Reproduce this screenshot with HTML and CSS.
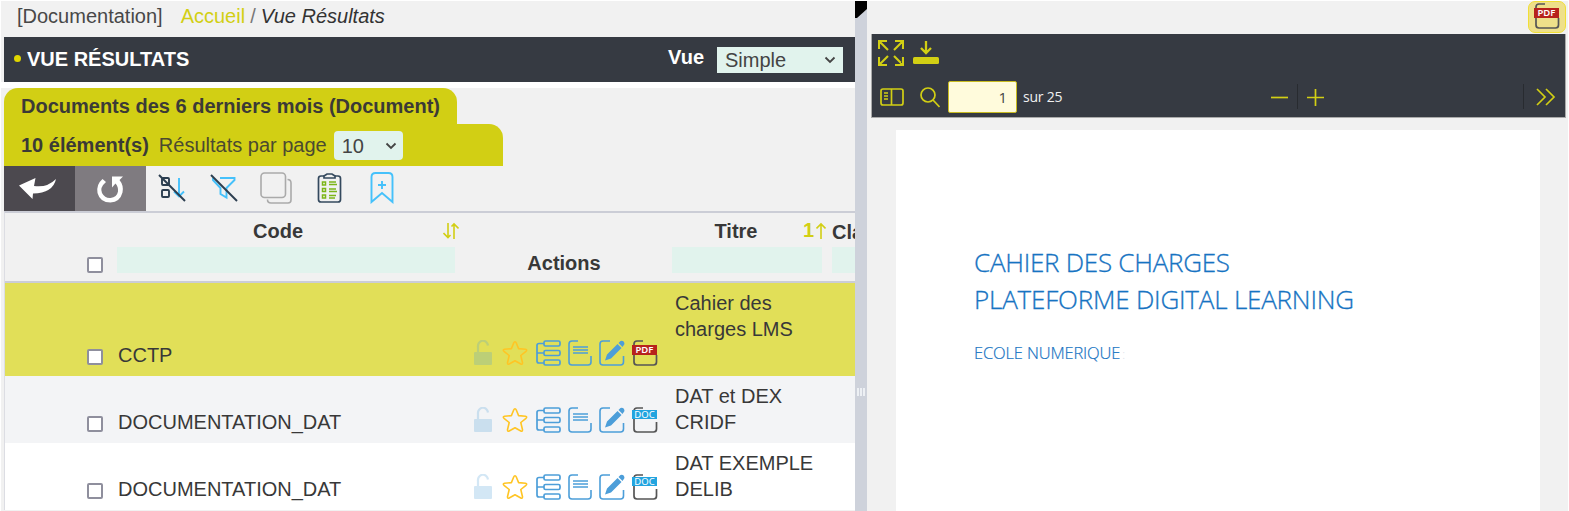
FILE: index.html
```html
<!DOCTYPE html>
<html lang="fr">
<head>
<meta charset="utf-8">
<title>Vue Résultats</title>
<link rel="stylesheet" href="styles.css">
</head>
<body>
<svg class="defs" width="0" height="0">
  <symbol id="lock" viewBox="0 0 18 26"><rect y="12" width="18" height="13" rx="1"/><path d="M4 12V7a5 5.500 0 0 1 10-1.500" fill="none" stroke="currentColor" stroke-width="2.200"/></symbol>
  <symbol id="star" viewBox="0 0 26 26"><path d="M13 1.800Q13.800 1.800 14.300 3L16.600 8.600 23.500 9.300Q25.500 9.800 24 11.300L18.800 15.500 20.500 22.800Q20.500 24.700 18.800 24L13 20.700 7.200 24Q5.500 24.700 5.500 22.800L7.200 15.500 2 11.300Q.5 9.800 2.500 9.300L9.400 8.600 11.700 3Q12.200 1.800 13 1.800z" fill="none" stroke="currentColor" stroke-width="1.600" stroke-linejoin="round"/></symbol>
  <symbol id="tree" viewBox="0 0 26 26"><g fill="none" stroke="currentColor" stroke-width="1.700"><rect x="9" y="1" width="16" height="5" rx="1.500"/><rect x="9" y="10.500" width="16" height="5" rx="1.500"/><rect x="9" y="20" width="16" height="5" rx="1.500"/><path d="M9 3.500H4Q2 3.500 2 5.500V21Q2 23 4 23H9M2 13H9"/></g></symbol>
  <symbol id="note" viewBox="0 0 24 26"><path d="M10 1H4Q1 1 1 4V22Q1 25 4 25H20Q23 25 23 22V16" fill="none" stroke="currentColor" stroke-width="1.600"/><path d="M5 7H20M5 10H20M5 13H20" stroke="currentColor" stroke-width="1.300"/></symbol>
  <symbol id="edit" viewBox="0 0 26 26"><path d="M11 1H4Q1 1 1 4V22Q1 25 4 25H21.500Q24.500 25 24.500 22V16" fill="none" stroke="currentColor" stroke-width="1.600"/><path d="M6 20.500L8 14.500 18.500 4 22.500 8 12 18.500zM19.500 3L21.500 1Q25 0 25.500 4L23.500 7z" fill="currentColor"/></symbol>
  <symbol id="file" viewBox="0 0 26 26"><path d="M11 1H5Q2 1 2 4V22Q2 25 5 25H21.500Q24.500 25 24.500 22V15" fill="none" stroke="#555" stroke-width="1.700"/></symbol>
</svg>
<div class="app">
  <main class="left">
    <nav class="crumbs"><span class="ctx">[Documentation]</span><a>Accueil</a><span class="sep">/</span><i>Vue Résultats</i></nav>
    <header class="titlebar">
      <span class="dot"></span><h1>VUE RÉSULTATS</h1>
      <label>Vue</label>
      <div class="select view"><span>Simple</span><svg width="12" height="8" viewBox="0 0 12 8"><path d="M1.500 1.500L6 6l4.500-4.500"/></svg></div>
    </header>
    <div class="tab first">Documents des 6 derniers mois (Document)</div>
    <div class="tab second"><b>10 élément(s)</b><span>Résultats par page</span>
      <div class="select count"><span>10</span><svg width="12" height="8" viewBox="0 0 12 8"><path d="M1.500 1.500L6 6l4.500-4.500"/></svg></div>
    </div>
    <div class="toolbar">
      <button class="back"><svg width="38" height="24" viewBox="0 0 38 24"><path d="M0 8.500L16.500 1 15 9Q28 11 37 2 34 16 14 16.500L13.500 22z" fill="#fff"/></svg></button>
      <button class="reload"><svg width="28" height="28" viewBox="0 0 28 28"><path d="M6.500 4L10 7Q3.500 12.500 6 18 9 23.500 14.500 23 21 22 22 16.500 22.500 12 19.500 8.500L16 12.500V1.500H27L23.500 5Q28 10.500 26.500 17.500 24 27 14.500 27.500 4 27.500 1.500 18 0 9.500 6.500 4z" fill="#fff"/></svg></button>
      <div class="tools">
        <svg width="28" height="28" viewBox="0 0 28 28" fill="none" stroke-width="1.900"><g stroke="#2c3e50"><rect x="4" y="4" width="7" height="7" rx="1"/><rect x="4" y="16" width="7" height="7" rx="1"/></g><path d="M21 4V22M16 17.500L21 22.500 26 17.500" stroke="#45c1fb"/><path d="M1 1L27 27" stroke="#2c3e50"/></svg>
        <svg width="28" height="28" viewBox="0 0 28 28" fill="none" stroke-width="1.900"><path d="M10 4H24.500V6L16.500 14V23.500L10.500 20V14L3 6V4" stroke="#45c1fb"/><path d="M1 1L27 27" stroke="#2c3e50"/></svg>
        <svg width="32" height="32" viewBox="0 0 32 32" fill="none" stroke="#aaa" stroke-width="1.600"><rect x="1" y="1" width="24.500" height="24.500" rx="3.500"/><path d="M27.500 7.500Q31 7.500 31 11V28Q31 31 28 31H11Q7.500 31 7.500 27.500"/></svg>
        <svg width="25" height="30" viewBox="0 0 25 30" fill="none" stroke="#34495e" stroke-width="1.700"><path d="M7 3H4Q1.500 3 1.500 5.500V26.500Q1.500 29 4 29H21Q23.500 29 23.500 26.500V5.500Q23.500 3 21 3H18"/><path d="M7 5V3L10 1H15L18 3V5z"/><g stroke="#7cb518" stroke-width="1.500"><rect x="5.500" y="9" width="3" height="3"/><rect x="5.500" y="15.500" width="3" height="3"/><rect x="5.500" y="22" width="3" height="3"/><path d="M12 9H19M12 11.500H20M12 16H19M12 18.500H20M12 22.500H19M12 25H18"/></g></svg>
        <svg width="24" height="32" viewBox="0 0 24 32" fill="none" stroke="#45c1fb" stroke-width="1.900"><path d="M1.500 30V5Q1.500 1 5.500 1H18.500Q22.500 1 22.500 5V30L12 21z"/><path d="M12 9V17M8 13H16"/></svg>
      </div>
    </div>
    <section class="table">
      <div class="row head">
        <div class="check"><i class="box"></i></div>
        <div class="hcell code"><div class="label"><span>Code</span><svg width="16" height="18" viewBox="0 0 16 18"><path d="M5 1V15M.5 11L5 15.500 7.500 13M11 17V2M8.500 4.500L11 2 15.500 6.500"/></svg></div><div class="field"></div></div>
        <div class="hcell act">Actions</div>
        <div class="hcell titre"><div class="label"><span>Titre</span><em>1</em><svg width="10" height="18" viewBox="0 0 10 18"><path d="M5 17V2M.5 6.500L5 2 9.500 6.500"/></svg></div><div class="field"></div></div>
        <div class="hcell cls"><div class="label">Cla</div><div class="field"></div></div>
      </div>
      <div class="row sel">
        <div class="check"><i class="box"></i></div><div class="code">CCTP</div>
        <div class="actions"><svg class="lk"><use href="#lock"/></svg><svg class="st"><use href="#star"/></svg><svg><use href="#tree"/></svg><svg class="nt"><use href="#note"/></svg><svg><use href="#edit"/></svg><span class="file"><svg><use href="#file"/></svg><b class="pdf">PDF</b></span></div>
        <div class="titre">Cahier des<br>charges LMS<br>&nbsp;</div>
      </div>
      <div class="row alt">
        <div class="check"><i class="box"></i></div><div class="code">DOCUMENTATION_DAT</div>
        <div class="actions"><svg class="lk"><use href="#lock"/></svg><svg class="st"><use href="#star"/></svg><svg><use href="#tree"/></svg><svg class="nt"><use href="#note"/></svg><svg><use href="#edit"/></svg><span class="file"><svg><use href="#file"/></svg><b class="doc">DOC</b></span></div>
        <div class="titre">DAT et DEX<br>CRIDF</div>
      </div>
      <div class="row">
        <div class="check"><i class="box"></i></div><div class="code">DOCUMENTATION_DAT</div>
        <div class="actions"><svg class="lk"><use href="#lock"/></svg><svg class="st"><use href="#star"/></svg><svg><use href="#tree"/></svg><svg class="nt"><use href="#note"/></svg><svg><use href="#edit"/></svg><span class="file"><svg><use href="#file"/></svg><b class="doc">DOC</b></span></div>
        <div class="titre">DAT EXEMPLE<br>DELIB</div>
      </div>
    </section>
  </main>
  <div class="splitter"><svg width="12" height="17" viewBox="0 0 12 17"><path d="M0 0H12V8L2 17H0z"/></svg><div class="grip"><i></i><i></i><i></i></div></div>
  <aside class="right">
    <div class="filebar"><div class="chip"><span class="file"><svg><use href="#file"/></svg><b class="pdf">PDF</b></span></div></div>
    <div class="viewer">
      <div class="vtop">
        <svg width="26" height="26" viewBox="0 0 26 26" fill="none" stroke="#d2cf14" stroke-width="2.100"><path d="M1 9V1H9M1 1L10 10M17 1H25V9M25 1L16 10M1 17V25H9M1 25L10 16M17 25H25V17M25 25L16 16"/></svg>
        <svg width="26" height="24" viewBox="0 0 26 24"><rect y="16" width="26" height="7" rx="1.500" fill="#d2cf14"/><path d="M13 0V11M8 7L13 12 18 7" fill="none" stroke="#d2cf14" stroke-width="2.300"/></svg>
      </div>
      <div class="vbar">
        <svg class="side" width="24" height="18" viewBox="0 0 24 18"><rect x="1" y="1" width="22" height="16" rx="2"/><path d="M11.500 1V17M4 5H8M4 8H8M4 11H8"/></svg>
        <svg class="mag" width="20" height="21" viewBox="0 0 20 21"><circle cx="8" cy="8" r="7"/><path d="M13 13L19.500 20"/></svg>
        <div class="page">1</div><span class="total">sur 25</span>
        <div class="zoom"><svg width="17" height="18" viewBox="0 0 17 18"><path d="M0 9.500H17"/></svg><i></i><svg width="17" height="18" viewBox="0 0 17 18"><path d="M0 9.500H17M8.500 1V18"/></svg></div>
        <div class="more"><i></i><svg width="20" height="18" viewBox="0 0 20 18"><path d="M1 1L9 9 1 17M10 1L18 9 10 17"/></svg></div>
      </div>
    </div>
    <article class="sheet"><h2><span class="l1">CAHIER DES CHARGES</span><span class="l2">PLATEFORME DIGITAL LEARNING</span></h2><p>ECOLE NUMERIQUE<span class="faint">:</span></p></article>
  </aside>
</div>
</body>
</html>
```
FILE: styles.css
```css
* { box-sizing: border-box; }
body { margin: 0; background: #f1f1f1; color: #383838; font: 20px/26px "Liberation Sans", Arial, sans-serif; overflow: hidden; }
svg { display: block; flex: none; }
.defs { position: absolute; }
.app { display: flex; height: 511px; border-top: 1px solid #fff; border-left: 1px solid #fff; overflow: hidden; }
.left { width: 854px; padding-left: 3px; overflow: hidden; flex: none; background: linear-gradient(#f1f1f1 81px, #fff 81px, #fff 87px, #f1f1f1 87px); }
.crumbs { height: 36px; padding: 2px 0 0 13px; display: flex; white-space: nowrap; color: #484848; }
.crumbs a { color: #d2cf14; margin-left: 18px; }
.crumbs .sep { margin: 0 5px; color: #777; }
.crumbs i { color: #333; }
.titlebar { height: 45px; background: #363a42; display: flex; align-items: center; color: #fff; }
.dot { width: 7px; height: 7px; border-radius: 50%; background: #e0d600; margin: 0 6px 3px 10px; }
h1 { margin: 0; font: bold 20px/24px "Liberation Sans", Arial, sans-serif; flex: 1; padding-bottom: 2px; }
.titlebar label { font-weight: bold; margin: 0 13px 5px 0; }
.select { display: flex; align-items: center; justify-content: space-between; background: #e1f3ed; color: #444; }
.select svg { fill: none; stroke: #444; stroke-width: 1.800; }
.view { width: 126px; height: 26px; padding: 1px 7px 0 8px; margin-right: 12px; }
.tab { background: #d2cf14; color: #3b3a36; }
.first { width: 453px; height: 36px; margin-top: 6px; border-radius: 14px 14px 0 0; font-weight: bold; padding: 5px 17px; white-space: nowrap; }
.second { width: 499px; height: 42px; border-radius: 0 14px 0 0; display: flex; align-items: center; padding-left: 17px; }
.second b, .second > span { padding-bottom: 1px; }
.second b { margin-right: 10px; }
.second > span { margin-right: 7px; color: #4b4a30; }
.count { width: 69px; height: 29px; padding: 1px 6px 0 8px; border-radius: 4px; margin-top: 1px; }
.toolbar { display: flex; height: 45px; }
.toolbar button { border: 0; padding: 0; width: 71px; display: flex; justify-content: center; align-items: center; background: #4c494f; }
.toolbar .back svg { margin-right: 3px; }
.toolbar .reload { background: #7f7b80; }
.toolbar .reload svg { margin-right: 1px; }
.tools { display: flex; align-items: center; padding: 0 0 1px 12px; gap: 24px; }
.tools svg:nth-child(3) { margin-left: -2px; }
.tools svg:nth-child(4) { margin-left: 1px; }
.tools svg:nth-child(5) { margin-left: 4px; }
.table { border-top: 2px solid #cbcdd6; border-left: 1px solid #dcdde3; }
.row { display: grid; grid-template-columns: 110px 344px 209px 160px 1fr; align-items: end; background: #fff; padding: 7px 0 8px; }
.head { height: 70px; padding: 0; background: #f1f1f1; border-bottom: 2px solid #cbcdd6; font-weight: bold; }
.sel { background: #e1df58; }
.alt { background: #f3f4f6; }
.check { padding: 0 0 4px 82px; }
.box { display: block; width: 16px; height: 16px; border: 2px solid #8f8f9d; border-radius: 2px; background: #fff; }
.sel .box { margin-bottom: -1px; }
.row:not(.head) .check { padding-bottom: 3px; }
.sel .box { margin-bottom: 0; }
.head .check { padding-bottom: 8px; }
.row > .code { padding-left: 3px; }
.row > .titre { padding-left: 7px; }
.row > .hcell.code, .row > .hcell.titre { padding: 0; }
.hcell { height: 68px; }
.label { height: 34px; padding-top: 5px; display: flex; }
.label svg { fill: none; stroke: #d2cf14; stroke-width: 1.600; }
.field { height: 26px; background: #e1f3ed; }
.hcell.code .field { width: 338px; margin-left: 2px; }
.hcell.code .label span { width: 328px; text-align: center; margin-right: 2px; }
.hcell.code .label svg { margin-top: 4px; }
.act { text-align: center; padding: 37px 0 0 1px; }
.hcell.titre .field { width: 150px; margin-left: 4px; }
.hcell.titre .label span { width: 134px; text-align: center; padding-left: 2px; }
.hcell.titre .label em { font-style: normal; color: #d2cf14; margin: -1px 2px 0 1px; }
.hcell.titre .label svg { margin-top: 4px; }
.cls { padding-left: 4px; overflow: hidden; }
.cls .label { padding-top: 6px; }
.actions { display: flex; align-items: flex-end; height: 28px; padding: 0 0 2px 15px; color: #4c9ed9; }
.actions svg { width: 26px; height: 26px; margin-right: 7px; }
.actions .lk { width: 18px; margin-right: 10px; fill: currentColor; opacity: .24; }
.actions .st { color: #ffc524; }
.actions .nt { width: 24px; }
.file { display: block; position: relative; width: 26px; height: 26px; }
.file svg { width: 26px; height: 26px; margin: 0; }
.file b { position: absolute; left: 0; top: 5px; width: 25px; height: 10px; background: #b7221c; color: #fff; font: 600 9.5px/10px "Noto Sans", sans-serif; text-align: center; }
.file .doc { background: #22a4df; top: 3px; height: 9px; line-height: 9px; font-weight: normal; }
.splitter { width: 12px; background: #ced2db; flex: none; display: flex; flex-direction: column; justify-content: space-between; }
.grip { display: flex; justify-content: center; gap: 1px; margin-bottom: 115px; }
.grip i { width: 2px; height: 8px; background: #edf0f4; }
.right { flex: 1; padding: 0 2px 0 4px; border-right: 1px solid #fff; display: flex; flex-direction: column; }
.filebar { height: 33px; display: flex; justify-content: flex-end; }
.chip { width: 38px; height: 32px; background: #eee08a; border: 1px solid #f1df35; border-radius: 7px; padding: 1px 0 0 5px; }
.viewer { height: 84px; background: #363a42; border: 1px solid #aaa; border-top: 0; }
.vtop { display: flex; padding: 6px 0 0 6px; gap: 9px; height: 43px; }
.vtop svg:last-child { margin-top: 1px; }
.vbar { display: flex; align-items: center; height: 39px; color: #f0f0f0; font: 15px/20px "Open Sans", sans-serif; }
.vbar svg { fill: none; stroke: #d2cf14; stroke-width: 1.700; }
.side { margin: 1px 16px 0 8px; }
.mag { margin-top: 1px; }
.page { width: 69px; height: 32px; margin: 0 6px 0 8px; background: #fffbdc; border: 1px solid #c8bb20; border-radius: 2px; color: #444; text-align: right; padding: 5px 9px 0 0; }
.total { font-size: 14px; letter-spacing: -.2px; width: 40px; white-space: nowrap; }
.zoom { display: flex; align-items: center; gap: 9px; margin-left: 208px; }
.zoom i, .more i { width: 1px; height: 25px; background: #282b30; }
.more { display: flex; align-items: center; gap: 12px; margin: 0 9px 0 auto; }
.sheet { flex: 1; margin: 12px 26px 0 25px; background: #fff; padding: 114px 0 0 78px; color: #1673c2; font-family: "Noto Sans", sans-serif; white-space: nowrap; }
h2 { margin: 0; font: 300 26px/37px "Open Sans", sans-serif; -webkit-text-stroke: .3px #1673c2; }
h2 span { display: block; }
.l1 { letter-spacing: -.26px; }
.l2 { letter-spacing: -.2px; }
.sheet p { margin: 22px 0 0; font: 300 16.500px/26px "Open Sans", sans-serif; letter-spacing: -.15px; -webkit-text-stroke: .2px #1673c2; }
.faint { color: #d5dce8; -webkit-text-stroke: 0; margin-left: 2px; font-size: 12px; }
```
